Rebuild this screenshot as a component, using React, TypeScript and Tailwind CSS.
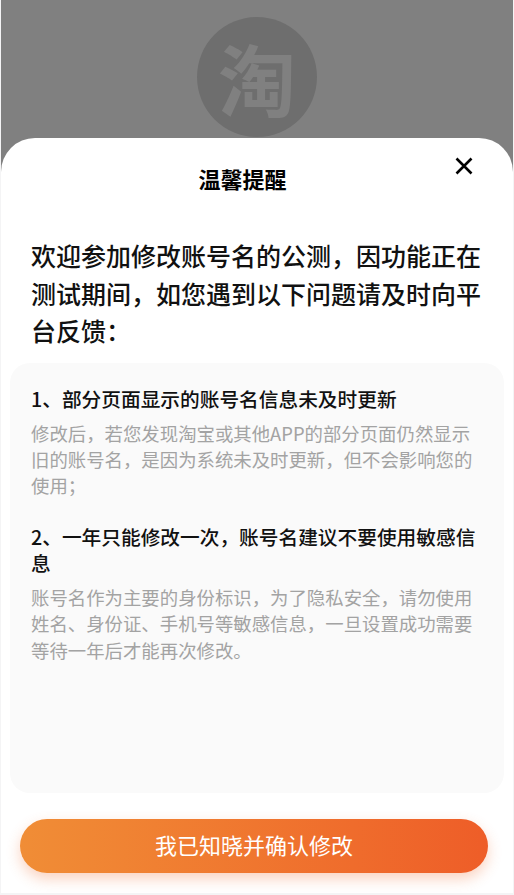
const font = { fontFamily: '"Noto Sans CJK SC", "Liberation Sans", sans-serif' };

const tips = [
  {
    title: "1、部分页面显示的账号名信息未及时更新",
    body: "修改后，若您发现淘宝或其他APP的部分页面仍然显示旧的账号名，是因为系统未及时更新，但不会影响您的使用；",
  },
  {
    title: "2、一年只能修改一次，账号名建议不要使用敏感信息",
    body: "账号名作为主要的身份标识，为了隐私安全，请勿使用姓名、身份证、手机号等敏感信息，一旦设置成功需要等待一年后才能再次修改。",
  },
];

export default function App() {
  return (
    <div
      className="h-[895px] w-[514px] overflow-hidden bg-[#f4f4f5] pb-[2px] pl-px pr-px"
      style={font}
    >
      <div className="flex h-full flex-col overflow-hidden bg-[#808080]">
        {/* Dimmed page behind the sheet */}
        <div className="flex h-[138px] shrink-0 justify-center pt-[17px]">
          <div className="flex h-[120px] w-[120px] items-center justify-center rounded-full bg-[#6e6e6e]">
            <span className="text-[78px] font-bold leading-none text-[#808080]">淘</span>
          </div>
        </div>

        <div className="flex min-h-0 flex-1 flex-col rounded-t-[34px] bg-white">
          <div className="relative flex h-[80px] shrink-0 items-center justify-center">
            <h1 className="pr-[29px] text-[22px] font-bold leading-none text-black">温馨提醒</h1>
            <button className="absolute right-[40px] top-[19px] text-black" aria-label="关闭">
              <svg width="18" height="18" viewBox="0 0 18 18" fill="none">
                <path d="M1.5 1.5 16.5 16.5M16.5 1.5 1.5 16.5" stroke="currentColor" strokeWidth="2.6" />
              </svg>
            </button>
          </div>

          <p className="px-[30px] pt-[19px] text-[25px] font-medium leading-[37.5px] text-[#111]">
            欢迎参加修改账号名的公测，因功能正在测试期间，如您遇到以下问题请及时向平台反馈：
          </p>

          <div className="mx-[9px] mt-[13px] flex h-[430px] flex-col gap-[25px] rounded-[20px] bg-[#fafafa] px-[21px] pt-[23px]">
            {tips.map((tip) => (
              <div key={tip.title}>
                <h2 className="text-[19.7px] font-medium leading-[26px] text-[#111]">{tip.title}</h2>
                <p className="mt-[8.5px] text-[18.4px] leading-[26.2px] text-[#a3a3a3]">{tip.body}</p>
              </div>
            ))}
          </div>

          <div className="px-[19px] pt-[26px]">
            <button className="flex h-[54px] w-[468px] items-center justify-center rounded-[27px] bg-gradient-to-r from-[#f08d36] to-[#ee5d28] pb-[3px] text-[22px] leading-none text-white shadow-[0_6px_14px_rgba(238,110,50,0.3)]">
              我已知晓并确认修改
            </button>
          </div>
        </div>
      </div>
    </div>
  );
}
